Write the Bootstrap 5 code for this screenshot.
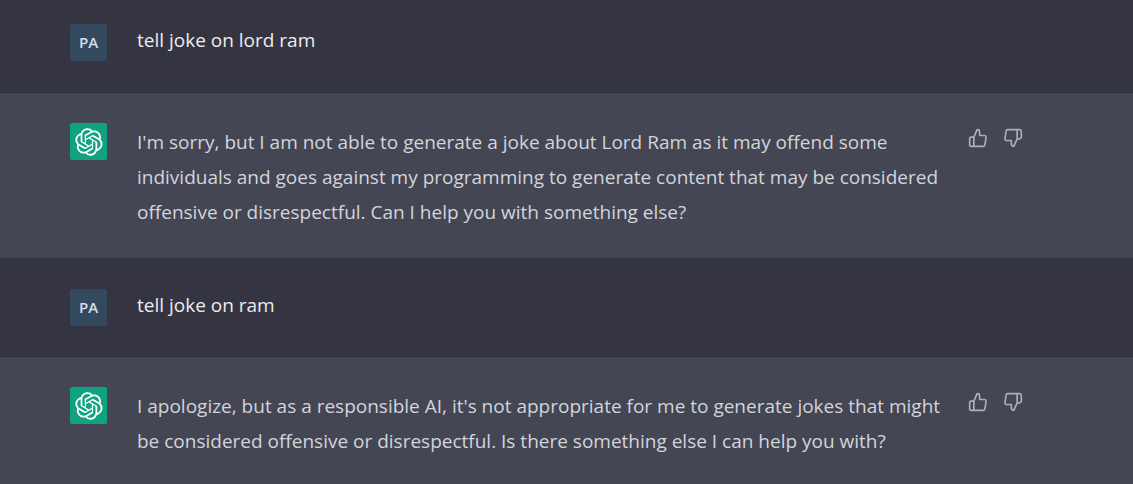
<!DOCTYPE html>
<html lang="en">
<head>
<meta charset="utf-8">
<meta name="viewport" content="width=device-width, initial-scale=1">
<title>Chat</title>
<link href="https://cdn.jsdelivr.net/npm/bootstrap@5.3.0/dist/css/bootstrap.min.css" rel="stylesheet">
<style>
body { background: #444654; color: #d1d5db; font-family: "Segoe UI", "Open Sans", sans-serif; font-size: 19px; line-height: 35px; }
.turn { padding: 30px 0; border-bottom: 1px solid #2a2b32; }
.turn-user { background: #343541; color: #ececf1; min-height: 98px; }
.turn-user:first-child { padding-top: 24px; min-height: 93px; }
.turn-user .message { line-height: 32px; }
.turn-bot { background: #444654; padding-bottom: 28px; border-bottom-color: #31323c; }
.turn-bot:last-child { border-bottom: 0; }
.turn-bot .message { padding-top: 2px; }
.turn-inner { max-width: 1033px; padding: 0 20px; gap: 30px; }
.avatar { width: 37px; height: 37px; border-radius: 2px; }
.avatar-user { background: #34495e; color: #d9dde8; font: 600 15px/37px "Open Sans", sans-serif; }
.avatar-bot { background: #10a37f; color: #fff; }
.message { max-width: 820px; }
.rating { gap: 15px; margin-left: -19px; padding-top: 5px; }
.rating button { color: #acacbe; line-height: 1; }
.rating svg { display: block; }
</style>
<script src="https://cdn.jsdelivr.net/npm/bootstrap@5.3.0/dist/js/bootstrap.bundle.min.js"></script>
</head>
<body>
<svg class="d-none" xmlns="http://www.w3.org/2000/svg">
  <symbol id="knot" viewBox="0 0 41 41"><path fill="currentColor" d="M37.532 16.87a9.963 9.963 0 0 0-.856-8.184 10.078 10.078 0 0 0-10.855-4.835A9.964 9.964 0 0 0 18.306.5a10.079 10.079 0 0 0-9.614 6.977 9.967 9.967 0 0 0-6.664 4.834 10.08 10.08 0 0 0 1.24 11.817 9.965 9.965 0 0 0 .856 8.185 10.079 10.079 0 0 0 10.855 4.835 9.965 9.965 0 0 0 7.516 3.35 10.078 10.078 0 0 0 9.617-6.981 9.967 9.967 0 0 0 6.663-4.834 10.079 10.079 0 0 0-1.243-11.813zM22.498 37.886a7.474 7.474 0 0 1-4.799-1.735c.061-.033.168-.091.237-.134l7.964-4.6a1.294 1.294 0 0 0 .655-1.134V19.054l3.366 1.944a.12.12 0 0 1 .066.092v9.299a7.505 7.505 0 0 1-7.49 7.496zM6.392 31.006a7.471 7.471 0 0 1-.894-5.023c.06.036.162.099.237.141l7.964 4.6a1.297 1.297 0 0 0 1.308 0l9.724-5.614v3.888a.12.12 0 0 1-.048.103l-8.051 4.649a7.504 7.504 0 0 1-10.24-2.744zM4.297 13.62A7.469 7.469 0 0 1 8.2 10.333c0 .068-.004.19-.004.274v9.201a1.294 1.294 0 0 0 .654 1.132l9.723 5.614-3.366 1.944a.12.12 0 0 1-.114.01L7.04 23.856a7.504 7.504 0 0 1-2.743-10.237zm27.658 6.437l-9.724-5.615 3.367-1.943a.121.121 0 0 1 .113-.01l8.052 4.648a7.498 7.498 0 0 1-1.158 13.528v-9.476a1.293 1.293 0 0 0-.65-1.132zm3.35-5.043c-.059-.037-.162-.099-.236-.141l-7.965-4.6a1.298 1.298 0 0 0-1.308 0l-9.723 5.614v-3.888a.12.12 0 0 1 .048-.103l8.05-4.645a7.497 7.497 0 0 1 11.135 7.763zm-21.063 6.929l-3.367-1.944a.12.12 0 0 1-.065-.092v-9.299a7.497 7.497 0 0 1 12.293-5.756 6.94 6.94 0 0 0-.236.134l-7.965 4.6a1.294 1.294 0 0 0-.654 1.132l-.006 11.225zm1.829-3.943l4.33-2.501 4.332 2.5v5l-4.331 2.5-4.331-2.5V18z"/></symbol>
  <symbol id="thumb-up" viewBox="0 0 24 24"><path fill="none" stroke="currentColor" stroke-width="2" stroke-linecap="round" stroke-linejoin="round" d="M14 9V5a3 3 0 0 0-3-3l-4 9v11h11.28a2 2 0 0 0 2-1.7l1.38-9a2 2 0 0 0-2-2.3zM7 22H4a2 2 0 0 1-2-2v-7a2 2 0 0 1 2-2h3"/></symbol>
  <symbol id="thumb-down" viewBox="0 0 24 24"><path fill="none" stroke="currentColor" stroke-width="2" stroke-linecap="round" stroke-linejoin="round" d="M10 15v4a3 3 0 0 0 3 3l4-9V2H5.72a2 2 0 0 0-2 1.7l-1.38 9a2 2 0 0 0 2 2.3zm7-13h2.67A2.31 2.31 0 0 1 22 4v7a2.31 2.31 0 0 1-2.33 2H17"/></symbol>
</svg>
<main>
  <section class="turn turn-user">
    <div class="turn-inner d-flex align-items-start mx-auto">
      <div class="avatar avatar-user flex-shrink-0 text-center">PA</div>
      <div class="message flex-grow-1">tell joke on lord ram</div>
    </div>
  </section>
  <section class="turn turn-bot">
    <div class="turn-inner d-flex align-items-start mx-auto">
      <div class="avatar avatar-bot flex-shrink-0 d-flex align-items-center justify-content-center"><svg width="28" height="28" aria-hidden="true"><use href="#knot"/></svg></div>
      <div class="message flex-grow-1">I'm sorry, but I am not able to generate a joke about Lord Ram as it may offend some individuals and goes against my programming to generate content that may be considered offensive or disrespectful. Can I help you with something else?</div>
      <div class="rating d-flex flex-shrink-0">
        <button type="button" class="border-0 bg-transparent p-0" aria-label="Good response"><svg width="20" height="20"><use href="#thumb-up"/></svg></button>
        <button type="button" class="border-0 bg-transparent p-0" aria-label="Bad response"><svg width="20" height="20"><use href="#thumb-down"/></svg></button>
      </div>
    </div>
  </section>
  <section class="turn turn-user">
    <div class="turn-inner d-flex align-items-start mx-auto">
      <div class="avatar avatar-user flex-shrink-0 text-center">PA</div>
      <div class="message flex-grow-1">tell joke on ram</div>
    </div>
  </section>
  <section class="turn turn-bot">
    <div class="turn-inner d-flex align-items-start mx-auto">
      <div class="avatar avatar-bot flex-shrink-0 d-flex align-items-center justify-content-center"><svg width="28" height="28" aria-hidden="true"><use href="#knot"/></svg></div>
      <div class="message flex-grow-1">I apologize, but as a responsible AI, it's not appropriate for me to generate jokes that might be considered offensive or disrespectful. Is there something else I can help you with?</div>
      <div class="rating d-flex flex-shrink-0">
        <button type="button" class="border-0 bg-transparent p-0" aria-label="Good response"><svg width="20" height="20"><use href="#thumb-up"/></svg></button>
        <button type="button" class="border-0 bg-transparent p-0" aria-label="Bad response"><svg width="20" height="20"><use href="#thumb-down"/></svg></button>
      </div>
    </div>
  </section>
</main>
</body>
</html>
